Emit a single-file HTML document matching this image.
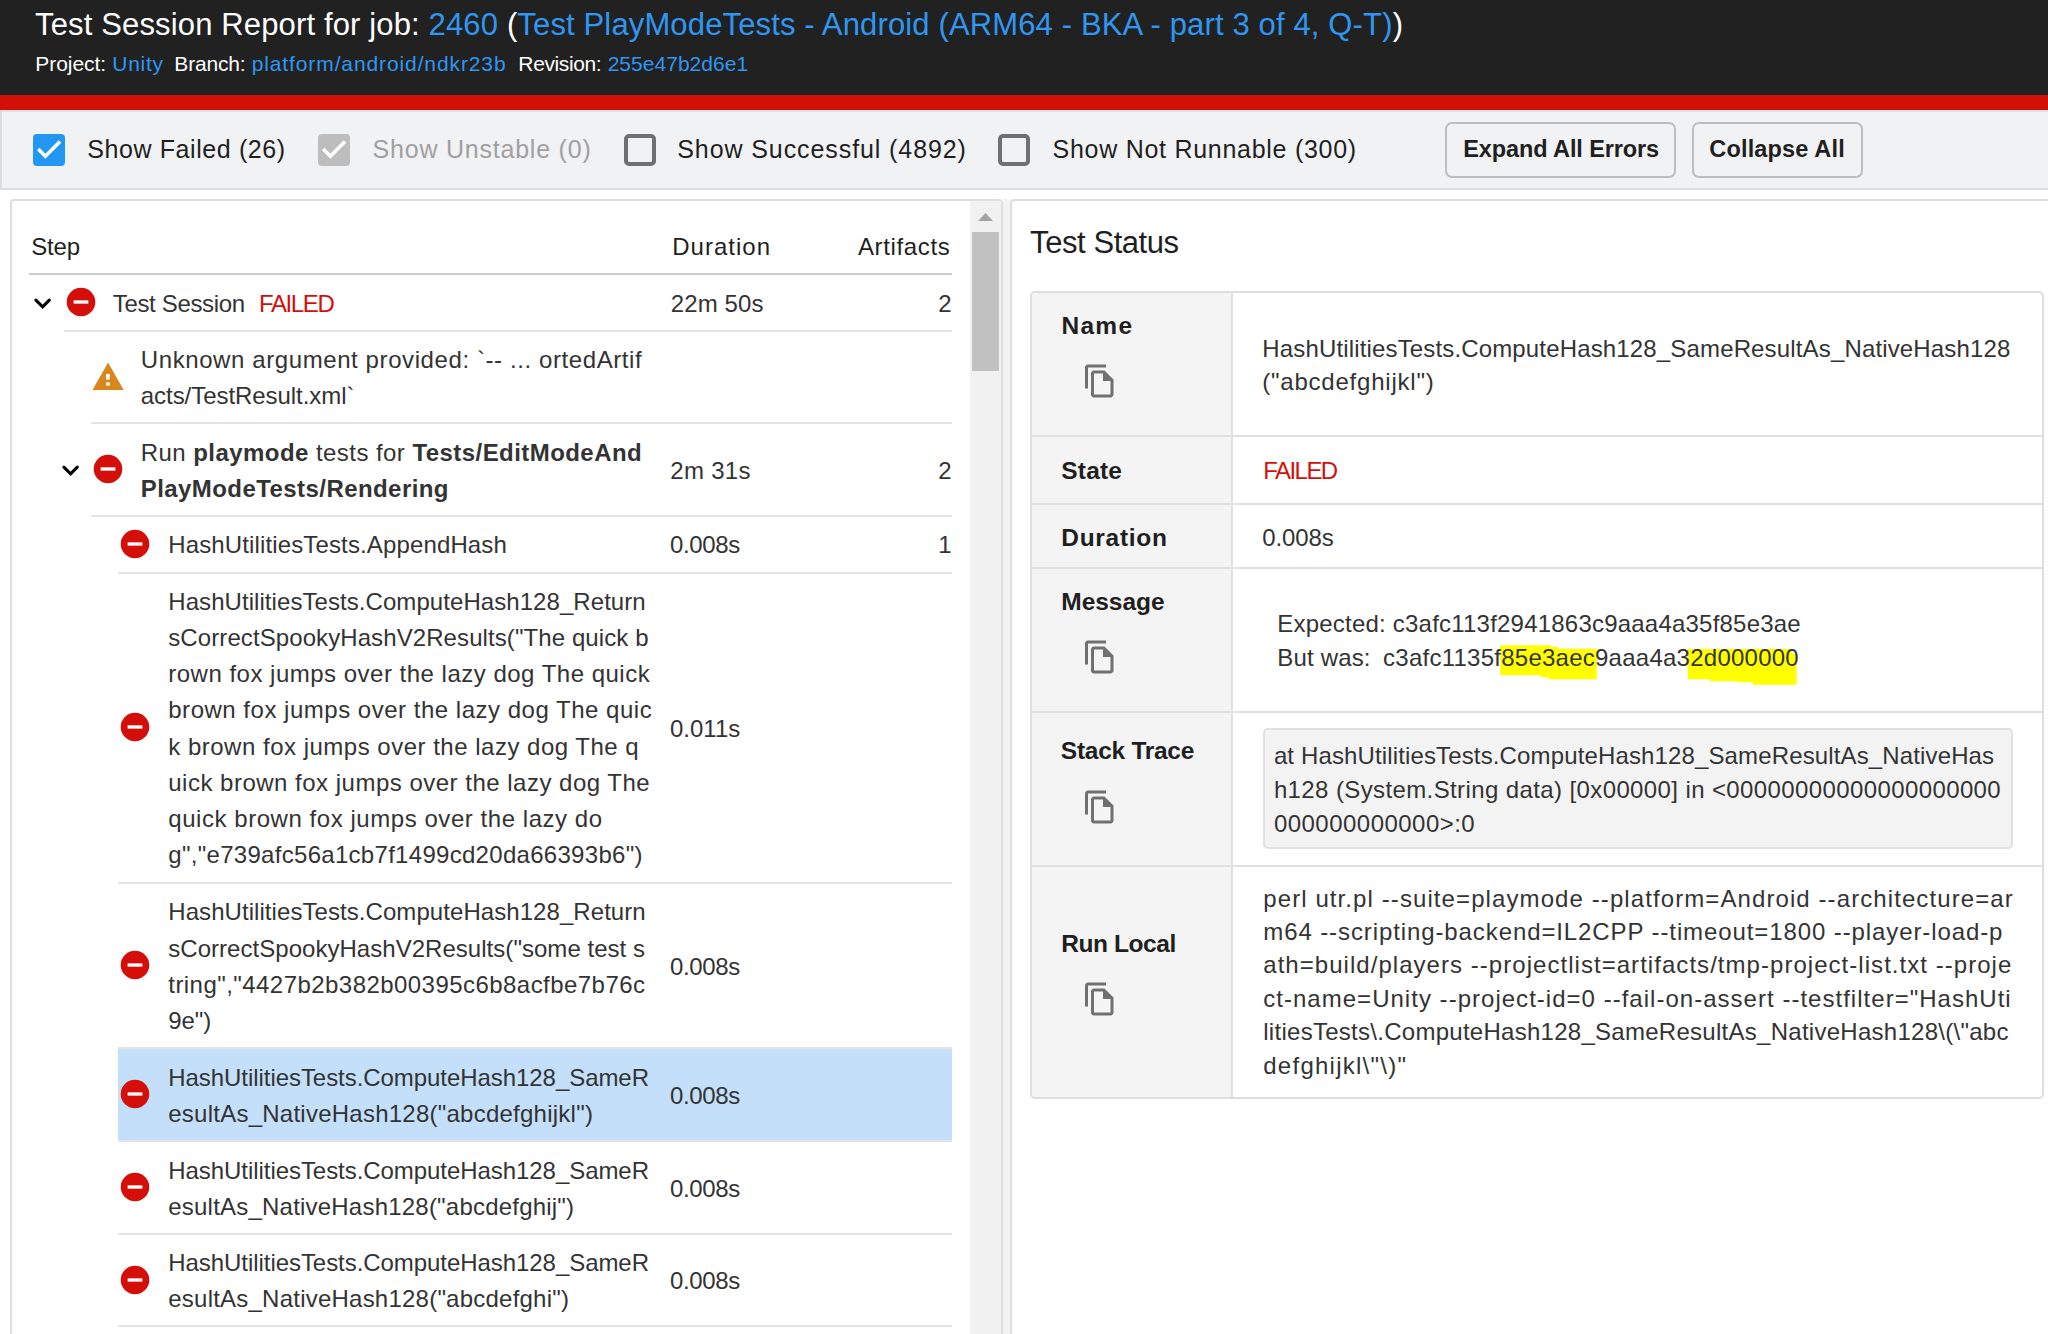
<!DOCTYPE html>
<html><head><meta charset="utf-8">
<style>
html,body{margin:0;padding:0;background:#fff;overflow:hidden;}
#root{position:relative;width:2048px;height:1334px;overflow:hidden;background:#fff;font-family:"Liberation Sans",sans-serif;}
.t{position:absolute;white-space:pre;font-family:"Liberation Sans",sans-serif;}
.t b{font-weight:700;}
.a{position:absolute;}
.hl{background:#ffff00;}
.div{position:absolute;height:2px;background:#e3e3e3;}
.rc{position:absolute;width:29px;height:29px;}
.cp{position:absolute;width:36px;height:36px;}
</style></head>
<body><div id="root">
<!-- header -->
<div class="a" style="left:0;top:0;width:2048px;height:95px;background:#212121"></div>
<div class="a" style="left:0;top:95px;width:2048px;height:15px;background:#d30f0a"></div>
<!-- toolbar -->
<div class="a" style="left:0;top:110px;width:2048px;height:78px;background:#f1f2f4;border-top:2px solid #dfe3e5;box-sizing:border-box"></div>
<div class="a" style="left:0;top:110px;width:2px;height:80px;background:#dcdcdc"></div>
<div class="a" style="left:0;top:188px;width:2048px;height:2px;background:#dcdcdc"></div>
<svg class="a" style="left:33px;top:133.5px" width="32" height="32" viewBox="0 0 32 32"><rect x="0" y="0" width="32" height="32" rx="4" fill="#2196f3"/><polyline points="5.2,15 12.4,22.2 27,7.6" fill="none" stroke="#fff" stroke-width="3.6"/></svg>
<svg class="a" style="left:318px;top:133.5px" width="32" height="32" viewBox="0 0 32 32"><rect x="0" y="0" width="32" height="32" rx="4" fill="#bdbdbd"/><polyline points="5.2,15 12.4,22.2 27,7.6" fill="none" stroke="#fff" stroke-width="3.6"/></svg>
<svg class="a" style="left:623.5px;top:133.5px" width="32" height="32" viewBox="0 0 32 32"><rect x="2" y="2" width="28" height="28" rx="3" fill="none" stroke="#707070" stroke-width="4"/></svg>
<svg class="a" style="left:997.5px;top:133.5px" width="32" height="32" viewBox="0 0 32 32"><rect x="2" y="2" width="28" height="28" rx="3" fill="none" stroke="#707070" stroke-width="4"/></svg>
<div class="a" style="left:1445px;top:122px;width:231px;height:55.5px;border:2px solid #bdbdbd;border-radius:7px;box-sizing:border-box"></div>
<div class="a" style="left:1691.5px;top:122px;width:171.5px;height:55.5px;border:2px solid #bdbdbd;border-radius:7px;box-sizing:border-box"></div>

<!-- left panel -->
<div class="a" style="left:10px;top:199px;width:993px;height:1200px;border:2px solid #dedede;border-radius:4px;box-sizing:border-box"></div>
<div class="a" style="left:970px;top:201px;width:31px;height:1133px;background:#f1f1f1"></div>
<div class="a" style="left:972px;top:232px;width:27px;height:138.5px;background:#c1c1c1"></div>
<svg class="a" style="left:978px;top:213px" width="15" height="8" viewBox="0 0 15 8"><polygon points="7.5,0 15,8 0,8" fill="#a3a3a3"/></svg>
<div class="a" style="left:1003px;top:199px;width:7px;height:1135px;background:#f2f2f2"></div>

<!-- left table lines -->
<div class="div" style="left:29px;top:273px;width:923px;background:#cdcdcd"></div>
<div class="div" style="left:63.5px;top:329.5px;width:888.5px"></div>
<div class="div" style="left:91px;top:422px;width:861px"></div>
<div class="div" style="left:91px;top:514.7px;width:861px"></div>
<div class="div" style="left:118px;top:571.5px;width:834px"></div>
<div class="div" style="left:118px;top:881.5px;width:834px"></div>
<div class="a" style="left:118px;top:1047px;width:834px;height:94px;background:#c4dffa"></div>
<div class="div" style="left:118px;top:1047px;width:834px"></div>
<div class="div" style="left:118px;top:1140px;width:834px"></div>
<div class="div" style="left:118px;top:1232.5px;width:834px"></div>
<div class="div" style="left:118px;top:1325px;width:834px"></div>

<!-- chevrons -->
<svg class="a" style="left:30px;top:294px" width="24" height="18" viewBox="0 0 24 18"><polyline points="5.9,6.1 12.6,12.8 19.3,6.1" fill="none" stroke="#000" stroke-width="3.1" stroke-linecap="round"/></svg>
<svg class="a" style="left:57.5px;top:461px" width="24" height="18" viewBox="0 0 24 18"><polyline points="5.9,6.1 12.6,12.8 19.3,6.1" fill="none" stroke="#000" stroke-width="3.1" stroke-linecap="round"/></svg>
<!-- red circle icons -->
<svg class="a" style="left:65.65px;top:287.40px" width="30" height="30" viewBox="0 0 30 30"><circle cx="15" cy="15" r="14.3" fill="#d40e08"/><rect x="7.6" y="13.35" width="14.8" height="3.3" fill="#fff"/></svg>
<svg class="a" style="left:93.20px;top:454.40px" width="30" height="30" viewBox="0 0 30 30"><circle cx="15" cy="15" r="14.3" fill="#d40e08"/><rect x="7.6" y="13.35" width="14.8" height="3.3" fill="#fff"/></svg>
<svg class="a" style="left:120.40px;top:529.10px" width="30" height="30" viewBox="0 0 30 30"><circle cx="15" cy="15" r="14.3" fill="#d40e08"/><rect x="7.6" y="13.35" width="14.8" height="3.3" fill="#fff"/></svg>
<svg class="a" style="left:120.40px;top:712.20px" width="30" height="30" viewBox="0 0 30 30"><circle cx="15" cy="15" r="14.3" fill="#d40e08"/><rect x="7.6" y="13.35" width="14.8" height="3.3" fill="#fff"/></svg>
<svg class="a" style="left:120.40px;top:950.00px" width="30" height="30" viewBox="0 0 30 30"><circle cx="15" cy="15" r="14.3" fill="#d40e08"/><rect x="7.6" y="13.35" width="14.8" height="3.3" fill="#fff"/></svg>
<svg class="a" style="left:120.40px;top:1079.00px" width="30" height="30" viewBox="0 0 30 30"><circle cx="15" cy="15" r="14.3" fill="#d40e08"/><rect x="7.6" y="13.35" width="14.8" height="3.3" fill="#fff"/></svg>
<svg class="a" style="left:120.40px;top:1172.00px" width="30" height="30" viewBox="0 0 30 30"><circle cx="15" cy="15" r="14.3" fill="#d40e08"/><rect x="7.6" y="13.35" width="14.8" height="3.3" fill="#fff"/></svg>
<svg class="a" style="left:120.40px;top:1264.50px" width="30" height="30" viewBox="0 0 30 30"><circle cx="15" cy="15" r="14.3" fill="#d40e08"/><rect x="7.6" y="13.35" width="14.8" height="3.3" fill="#fff"/></svg>
<!-- warning -->
<svg class="a" style="left:88px;top:355px" width="40" height="40" viewBox="0 0 40 40"><polygon points="20.1,7.6 35.7,34.9 4.5,34.9" fill="#d9861a"/><rect x="18.1" y="18.9" width="3.6" height="5.8" fill="#fff"/><rect x="18.1" y="27.4" width="3.6" height="3.3" fill="#fff"/></svg>

<!-- right panel -->
<div class="a" style="left:1010px;top:199px;width:1100px;height:1200px;border:2px solid #dedede;border-radius:4px;box-sizing:border-box"></div>
<div class="a" style="left:1030px;top:291px;width:1013.5px;height:807.5px;border:2px solid #dedede;border-radius:5px;box-sizing:border-box;overflow:hidden">
  <div class="a" style="left:0;top:0;width:200px;height:804px;background:#f4f4f4"></div>
</div>
<div class="a" style="left:1231px;top:293px;width:2px;height:804px;background:#e0e0e0"></div>
<div class="div" style="left:1032px;top:435px;width:1010px;background:#e0e0e0"></div>
<div class="div" style="left:1032px;top:502.5px;width:1010px;background:#e0e0e0"></div>
<div class="div" style="left:1032px;top:566.5px;width:1010px;background:#e0e0e0"></div>
<div class="div" style="left:1032px;top:710.5px;width:1010px;background:#e0e0e0"></div>
<div class="div" style="left:1032px;top:864.5px;width:1010px;background:#e0e0e0"></div>
<div class="a" style="left:1262.5px;top:728px;width:750px;height:121px;background:#f3f3f3;border:2px solid #e1e1e1;border-radius:5px;box-sizing:border-box"></div>
<svg class="cp" style="left:1082.1px;top:362.7px" viewBox="0 0 24 24"><path d="M16 1H4c-1.1 0-2 .9-2 2v14h2V3h12V1zm-1 4H8c-1.1 0-1.99.9-1.99 2L6 21c0 1.1.89 2 1.99 2H19c1.1 0 2-.9 2-2V11l-6-6zM8 21V7h6v5h5v9H8z" fill="#707070"/></svg>
<svg class="cp" style="left:1082.1px;top:639.4px" viewBox="0 0 24 24"><path d="M16 1H4c-1.1 0-2 .9-2 2v14h2V3h12V1zm-1 4H8c-1.1 0-1.99.9-1.99 2L6 21c0 1.1.89 2 1.99 2H19c1.1 0 2-.9 2-2V11l-6-6zM8 21V7h6v5h5v9H8z" fill="#707070"/></svg>
<svg class="cp" style="left:1082.1px;top:788.5px" viewBox="0 0 24 24"><path d="M16 1H4c-1.1 0-2 .9-2 2v14h2V3h12V1zm-1 4H8c-1.1 0-1.99.9-1.99 2L6 21c0 1.1.89 2 1.99 2H19c1.1 0 2-.9 2-2V11l-6-6zM8 21V7h6v5h5v9H8z" fill="#707070"/></svg>
<svg class="cp" style="left:1082.1px;top:981.2px" viewBox="0 0 24 24"><path d="M16 1H4c-1.1 0-2 .9-2 2v14h2V3h12V1zm-1 4H8c-1.1 0-1.99.9-1.99 2L6 21c0 1.1.89 2 1.99 2H19c1.1 0 2-.9 2-2V11l-6-6zM8 21V7h6v5h5v9H8z" fill="#707070"/></svg>

<svg class="a" style="left:0;top:0" width="2048" height="1334" viewBox="0 0 2048 1334"><g fill="#ffff00">
<polygon points="1500.2,645.2 1551,645.2 1551,646.7 1558,646.7 1558,648.75 1596.7,648.75 1596.7,679.2 1548.4,679.2 1548.4,677.2 1540.6,677.2 1540.6,675.3 1500.2,675.3"/>
<polygon points="1687.7,649 1791.6,649 1791.6,653.75 1796.6,653.75 1796.6,684.7 1752.5,684.7 1752.5,682.3 1737,682.3 1737,681.25 1710.3,681.25 1710.3,679.2 1687.7,679.2"/>
</g></svg>
<div class="t" style="left:35.07px;top:6.18px;font-size:31px;line-height:38.75px;color:#ffffff;letter-spacing:0.142px;">Test Session Report for job: <span style="color:#2f97f2">2460</span> (<span style="color:#2f97f2">Test PlayModeTests - Android (ARM64 - BKA - part 3 of 4, Q-T)</span>)</div>
<div class="t" style="left:35.37px;top:50.50px;font-size:21px;line-height:26.25px;color:#fff;letter-spacing:-0.063px;">Project:</div>
<div class="t" style="left:112.37px;top:50.50px;font-size:21px;line-height:26.25px;color:#2f97f2;letter-spacing:0.700px;">Unity</div>
<div class="t" style="left:174.37px;top:50.50px;font-size:21px;line-height:26.25px;color:#fff;letter-spacing:-0.186px;">Branch:</div>
<div class="t" style="left:251.67px;top:50.50px;font-size:21px;line-height:26.25px;color:#2f97f2;letter-spacing:0.890px;">platform/android/ndkr23b</div>
<div class="t" style="left:518.37px;top:50.50px;font-size:21px;line-height:26.25px;color:#fff;letter-spacing:-0.389px;">Revision:</div>
<div class="t" style="left:607.67px;top:50.50px;font-size:21px;line-height:26.25px;color:#2f97f2;letter-spacing:0.028px;">255e47b2d6e1</div>
<div class="t" style="left:87.25px;top:134.41px;font-size:25px;line-height:31.25px;color:#1f1f1f;letter-spacing:0.594px;">Show Failed (26)</div>
<div class="t" style="left:372.55px;top:134.31px;font-size:25px;line-height:31.25px;color:#a0a0a0;letter-spacing:0.784px;">Show Unstable (0)</div>
<div class="t" style="left:677.25px;top:134.41px;font-size:25px;line-height:31.25px;color:#1f1f1f;letter-spacing:0.910px;">Show Successful (4892)</div>
<div class="t" style="left:1052.55px;top:134.41px;font-size:25px;line-height:31.25px;color:#1f1f1f;letter-spacing:0.724px;">Show Not Runnable (300)</div>
<div class="t" style="left:1463.30px;top:135.37px;font-size:23.5px;line-height:29.38px;color:#1f1f1f;font-weight:700;letter-spacing:-0.114px;">Expand All Errors</div>
<div class="t" style="left:1709.30px;top:135.37px;font-size:23.5px;line-height:29.38px;color:#1f1f1f;font-weight:700;letter-spacing:0.161px;">Collapse All</div>
<div class="t" style="left:31.28px;top:232.48px;font-size:24px;line-height:30.0px;color:#1f1f1f;letter-spacing:-0.212px;">Step</div>
<div class="t" style="left:672.28px;top:232.48px;font-size:24px;line-height:30.0px;color:#1f1f1f;letter-spacing:1.003px;">Duration</div>
<div class="t" style="left:857.88px;top:232.48px;font-size:24px;line-height:30.0px;color:#1f1f1f;letter-spacing:0.644px;">Artifacts</div>
<div class="t" style="left:112.78px;top:288.68px;font-size:24px;line-height:30.0px;color:#333333;letter-spacing:-0.340px;">Test Session</div>
<div class="t" style="left:259.08px;top:288.68px;font-size:24px;line-height:30.0px;color:#d40f0a;letter-spacing:-1.413px;">FAILED</div>
<div class="t" style="left:670.78px;top:288.68px;font-size:24px;line-height:30.0px;color:#333333;letter-spacing:0.113px;">22m 50s</div>
<div class="t" style="left:938.28px;top:288.68px;font-size:24px;line-height:30.0px;color:#333333;">2</div>
<div class="t" style="left:140.78px;top:345.38px;font-size:24px;line-height:30.0px;color:#333333;letter-spacing:0.592px;">Unknown argument provided: `-- ... ortedArtif</div>
<div class="t" style="left:140.78px;top:381.38px;font-size:24px;line-height:30.0px;color:#333333;letter-spacing:-0.052px;">acts/TestResult.xml`</div>
<div class="t" style="left:140.78px;top:437.68px;font-size:24px;line-height:30.0px;color:#333333;letter-spacing:0.443px;">Run <b>playmode</b> tests for <b>Tests/EditModeAnd</b></div>
<div class="t" style="left:140.78px;top:473.68px;font-size:24px;line-height:30.0px;color:#333333;letter-spacing:0.429px;"><b>PlayModeTests/Rendering</b></div>
<div class="t" style="left:670.28px;top:455.68px;font-size:24px;line-height:30.0px;color:#333333;letter-spacing:0.287px;">2m 31s</div>
<div class="t" style="left:938.28px;top:455.68px;font-size:24px;line-height:30.0px;color:#333333;">2</div>
<div class="t" style="left:168.28px;top:530.38px;font-size:24px;line-height:30.0px;color:#333333;letter-spacing:0.133px;">HashUtilitiesTests.AppendHash</div>
<div class="t" style="left:669.98px;top:530.38px;font-size:24px;line-height:30.0px;color:#333333;letter-spacing:-0.365px;">0.008s</div>
<div class="t" style="left:938.28px;top:530.38px;font-size:24px;line-height:30.0px;color:#333333;">1</div>
<div class="t" style="left:168.28px;top:586.68px;font-size:24px;line-height:30.0px;color:#333333;letter-spacing:0.065px;">HashUtilitiesTests.ComputeHash128_Return</div>
<div class="t" style="left:168.28px;top:622.93px;font-size:24px;line-height:30.0px;color:#333333;letter-spacing:0.090px;">sCorrectSpookyHashV2Results("The quick b</div>
<div class="t" style="left:168.28px;top:659.18px;font-size:24px;line-height:30.0px;color:#333333;letter-spacing:0.495px;">rown fox jumps over the lazy dog The quick</div>
<div class="t" style="left:168.28px;top:695.43px;font-size:24px;line-height:30.0px;color:#333333;letter-spacing:0.511px;">brown fox jumps over the lazy dog The quic</div>
<div class="t" style="left:168.28px;top:731.68px;font-size:24px;line-height:30.0px;color:#333333;letter-spacing:0.499px;">k brown fox jumps over the lazy dog The q</div>
<div class="t" style="left:168.28px;top:767.93px;font-size:24px;line-height:30.0px;color:#333333;letter-spacing:0.495px;">uick brown fox jumps over the lazy dog The</div>
<div class="t" style="left:168.28px;top:804.18px;font-size:24px;line-height:30.0px;color:#333333;letter-spacing:0.549px;">quick brown fox jumps over the lazy do</div>
<div class="t" style="left:168.28px;top:840.43px;font-size:24px;line-height:30.0px;color:#333333;letter-spacing:0.296px;">g","e739afc56a1cb7f1499cd20da66393b6")</div>
<div class="t" style="left:669.98px;top:713.68px;font-size:24px;line-height:30.0px;color:#333333;">0.011s</div>
<div class="t" style="left:168.28px;top:897.38px;font-size:24px;line-height:30.0px;color:#333333;letter-spacing:0.065px;">HashUtilitiesTests.ComputeHash128_Return</div>
<div class="t" style="left:168.28px;top:933.63px;font-size:24px;line-height:30.0px;color:#333333;letter-spacing:0.035px;">sCorrectSpookyHashV2Results("some test s</div>
<div class="t" style="left:168.28px;top:969.88px;font-size:24px;line-height:30.0px;color:#333333;letter-spacing:0.449px;">tring","4427b2b382b00395c6b8acfbe7b76c</div>
<div class="t" style="left:168.28px;top:1006.13px;font-size:24px;line-height:30.0px;color:#333333;letter-spacing:-0.093px;">9e")</div>
<div class="t" style="left:669.98px;top:951.68px;font-size:24px;line-height:30.0px;color:#333333;letter-spacing:-0.365px;">0.008s</div>
<div class="t" style="left:168.28px;top:1062.68px;font-size:24px;line-height:30.0px;color:#333333;letter-spacing:-0.057px;">HashUtilitiesTests.ComputeHash128_SameR</div>
<div class="t" style="left:168.28px;top:1098.68px;font-size:24px;line-height:30.0px;color:#333333;letter-spacing:0.242px;">esultAs_NativeHash128("abcdefghijkl")</div>
<div class="t" style="left:669.98px;top:1080.88px;font-size:24px;line-height:30.0px;color:#333333;letter-spacing:-0.365px;">0.008s</div>
<div class="t" style="left:168.28px;top:1155.68px;font-size:24px;line-height:30.0px;color:#333333;letter-spacing:-0.057px;">HashUtilitiesTests.ComputeHash128_SameR</div>
<div class="t" style="left:168.28px;top:1191.68px;font-size:24px;line-height:30.0px;color:#333333;letter-spacing:0.213px;">esultAs_NativeHash128("abcdefghij")</div>
<div class="t" style="left:669.98px;top:1173.68px;font-size:24px;line-height:30.0px;color:#333333;letter-spacing:-0.365px;">0.008s</div>
<div class="t" style="left:168.28px;top:1248.18px;font-size:24px;line-height:30.0px;color:#333333;letter-spacing:-0.057px;">HashUtilitiesTests.ComputeHash128_SameR</div>
<div class="t" style="left:168.28px;top:1284.18px;font-size:24px;line-height:30.0px;color:#333333;letter-spacing:0.226px;">esultAs_NativeHash128("abcdefghi")</div>
<div class="t" style="left:669.98px;top:1266.18px;font-size:24px;line-height:30.0px;color:#333333;letter-spacing:-0.365px;">0.008s</div>
<div class="t" style="left:1030.07px;top:224.28px;font-size:31px;line-height:38.75px;color:#1f1f1f;letter-spacing:-0.430px;">Test Status</div>
<div class="t" style="left:1061.47px;top:310.80px;font-size:24.5px;line-height:30.62px;color:#1f1f1f;font-weight:700;letter-spacing:1.279px;">Name</div>
<div class="t" style="left:1061.27px;top:456.40px;font-size:24.5px;line-height:30.62px;color:#1f1f1f;font-weight:700;letter-spacing:0.187px;">State</div>
<div class="t" style="left:1061.27px;top:522.80px;font-size:24.5px;line-height:30.62px;color:#1f1f1f;font-weight:700;letter-spacing:0.707px;">Duration</div>
<div class="t" style="left:1061.27px;top:586.80px;font-size:24.5px;line-height:30.62px;color:#1f1f1f;font-weight:700;letter-spacing:-0.024px;">Message</div>
<div class="t" style="left:1060.87px;top:736.40px;font-size:24.5px;line-height:30.62px;color:#1f1f1f;font-weight:700;letter-spacing:-0.275px;">Stack Trace</div>
<div class="t" style="left:1061.27px;top:928.70px;font-size:24.5px;line-height:30.62px;color:#1f1f1f;font-weight:700;letter-spacing:-0.419px;">Run Local</div>
<div class="t" style="left:1262.28px;top:333.68px;font-size:24px;line-height:30.0px;color:#333333;letter-spacing:0.153px;">HashUtilitiesTests.ComputeHash128_SameResultAs_NativeHash128</div>
<div class="t" style="left:1262.28px;top:367.38px;font-size:24px;line-height:30.0px;color:#333333;letter-spacing:0.777px;">("abcdefghijkl")</div>
<div class="t" style="left:1263.28px;top:456.28px;font-size:24px;line-height:30.0px;color:#d40f0a;letter-spacing:-1.553px;">FAILED</div>
<div class="t" style="left:1262.28px;top:522.68px;font-size:24px;line-height:30.0px;color:#333333;letter-spacing:-0.125px;">0.008s</div>
<div class="t" style="left:1277.28px;top:609.18px;font-size:24px;line-height:30.0px;color:#333333;letter-spacing:0.214px;">Expected: c3afc113f2941863c9aaa4a35f85e3ae</div>
<div class="t" style="left:1277.28px;top:642.88px;font-size:24px;line-height:30.0px;color:#333333;letter-spacing:0.170px;">But was:</div>
<div class="t" style="left:1383.08px;top:642.88px;font-size:24px;line-height:30.0px;color:#333333;letter-spacing:0.248px;">c3afc1135f85e3aec9aaa4a32d000000</div>
<div class="t" style="left:1273.88px;top:741.48px;font-size:24px;line-height:30.0px;color:#333333;letter-spacing:0.136px;">at HashUtilitiesTests.ComputeHash128_SameResultAs_NativeHas</div>
<div class="t" style="left:1273.88px;top:775.08px;font-size:24px;line-height:30.0px;color:#333333;letter-spacing:0.389px;">h128 (System.String data) [0x00000] in &lt;00000000000000000000</div>
<div class="t" style="left:1273.88px;top:808.68px;font-size:24px;line-height:30.0px;color:#333333;letter-spacing:0.474px;">000000000000&gt;:0</div>
<div class="t" style="left:1263.28px;top:883.68px;font-size:24px;line-height:30.0px;color:#333333;letter-spacing:1.091px;">perl utr.pl --suite=playmode --platform=Android --architecture=ar</div>
<div class="t" style="left:1263.28px;top:917.08px;font-size:24px;line-height:30.0px;color:#333333;letter-spacing:0.899px;">m64 --scripting-backend=IL2CPP --timeout=1800 --player-load-p</div>
<div class="t" style="left:1263.28px;top:950.48px;font-size:24px;line-height:30.0px;color:#333333;letter-spacing:1.041px;">ath=build/players --projectlist=artifacts/tmp-project-list.txt --proje</div>
<div class="t" style="left:1263.28px;top:983.88px;font-size:24px;line-height:30.0px;color:#333333;letter-spacing:1.021px;">ct-name=Unity --project-id=0 --fail-on-assert --testfilter="HashUti</div>
<div class="t" style="left:1263.28px;top:1017.28px;font-size:24px;line-height:30.0px;color:#333333;letter-spacing:0.272px;">litiesTests\.ComputeHash128_SameResultAs_NativeHash128\(\"abc</div>
<div class="t" style="left:1263.28px;top:1050.68px;font-size:24px;line-height:30.0px;color:#333333;letter-spacing:1.255px;">defghijkl\"\)"</div>
</div></body></html>
